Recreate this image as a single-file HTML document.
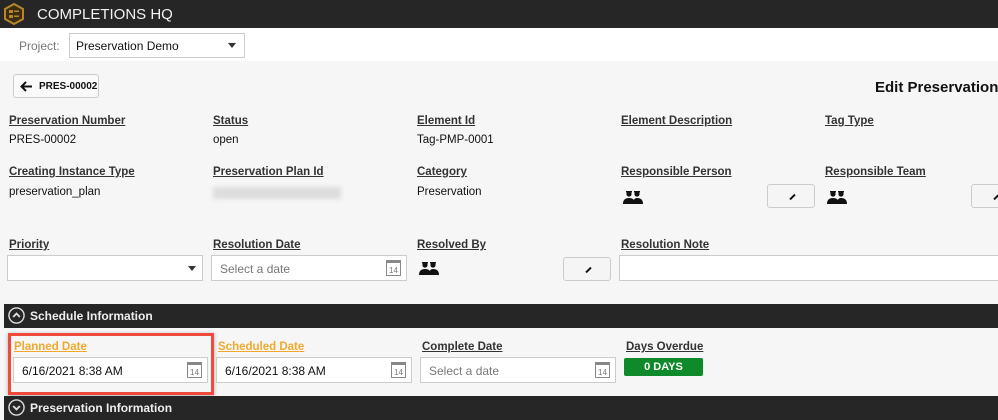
<!DOCTYPE html>
<html><head><style>
*{box-sizing:border-box;margin:0;padding:0}
body{width:998px;height:414px;overflow:hidden;background:#f6f6f6;font-family:"Liberation Sans",sans-serif;font-size:12px;color:#111;position:relative}
.a{position:absolute;white-space:nowrap}
.lbl{position:absolute;font-weight:bold;text-decoration:underline;color:#333;font-size:11.5px;white-space:nowrap}
.val{position:absolute;font-size:11.5px;color:#111;white-space:nowrap}
.inp{position:absolute;background:#fff;border:1px solid #ccc;height:26px;font-size:12px;padding:6px 8px;color:#111}
.ph{color:#777}
.cal{position:absolute;right:5px;top:4px;width:15px;height:16px;border:1.5px solid #888;font-size:8px;color:#777;text-align:center;line-height:11px;padding-top:2px;border-top-width:3px}
.btn{position:absolute;background:#f5f5f5;border:1px solid #ccc;border-radius:3px;width:48px;height:24px}
.btn:after{content:"";position:absolute;left:21px;top:11px;width:7px;height:2px;background:#111;transform:rotate(-45deg)}
.bar{position:absolute;left:4px;right:0;height:24px;background:#262626;color:#eee;font-weight:bold;font-size:12px;padding:5px 0 0 26px}
.circ{position:absolute;left:4px;top:3px;width:17px;height:17px}
.ppl{position:absolute;width:20px;height:14px}
</style></head><body>
<svg width="0" height="0" style="position:absolute"><defs>
<symbol id="pp" viewBox="0 0 20 14"><circle cx="6" cy="4" r="2.6" fill="#111"/><rect x="3" y="1" width="6" height="1.5" fill="#111"/><path d="M0 14 Q0 8 6 8 Q12 8 12 14Z" fill="#111"/><circle cx="14" cy="4" r="2.6" fill="#111"/><rect x="11" y="1" width="6" height="1.5" fill="#111"/><path d="M10 14 Q10 8 14 8 Q20 8 20 14Z" fill="#111"/></symbol>
<symbol id="up" viewBox="0 0 18 18"><circle cx="9" cy="9" r="8" fill="none" stroke="#ddd" stroke-width="1.5"/><path d="M5.5 10.5 L9 7 L12.5 10.5" fill="none" stroke="#ddd" stroke-width="2"/></symbol>
<symbol id="dn" viewBox="0 0 18 18"><circle cx="9" cy="9" r="8" fill="none" stroke="#ddd" stroke-width="1.5"/><path d="M5.5 7.5 L9 11 L12.5 7.5" fill="none" stroke="#ddd" stroke-width="2"/></symbol>
</defs></svg>
<div class="a" style="left:0;top:0;width:998px;height:28px;background:#262626"></div>
<svg class="a" style="left:3px;top:3px" width="22" height="22" viewBox="0 0 22 22"><path d="M11 1 L20 6 L20 16 L11 21 L2 16 L2 6Z" fill="#3a2d10" stroke="#b8862a" stroke-width="2"/><rect x="6" y="7" width="4" height="3" fill="#b8862a"/><rect x="6" y="12" width="4" height="3" fill="#b8862a"/><rect x="11" y="7.5" width="5" height="1.5" fill="#b8862a"/><rect x="11" y="12.5" width="5" height="1.5" fill="#b8862a"/></svg>
<div class="a" style="left:37px;top:6px;color:#f2f2f2;font-size:15px">COMPLETIONS HQ</div>
<div class="a" style="left:0;top:28px;width:998px;height:33px;background:#fff"></div>
<div class="a" style="left:19px;top:39px;color:#777;font-size:12px">Project:</div>
<div class="a" style="left:69px;top:33px;width:176px;height:25px;border:1px solid #ccc;background:#fff;padding:5px 6px;font-size:12px">Preservation Demo<span style="position:absolute;right:8px;top:9px;border:4px solid transparent;border-top:5px solid #333"></span></div>
<div class="a" style="left:13px;top:74px;width:86px;height:24px;border:1px solid #ccc;border-radius:3px;background:#fafafa;font-size:10px;font-weight:bold;padding:6px 0 0 25px">PRES-00002<svg style="position:absolute;left:6px;top:6px" width="13" height="11" viewBox="0 0 13 11"><path d="M12 5.5 H2 M6 1 L1.5 5.5 L6 10" fill="none" stroke="#111" stroke-width="2"/></svg></div>
<div class="a" style="left:875px;top:79px;font-weight:bold;font-size:15px">Edit Preservation</div>

<div class="lbl" style="left:9px;top:115px">Preservation Number</div><div class="val" style="left:9px;top:134px">PRES-00002</div>
<div class="lbl" style="left:213px;top:115px">Status</div><div class="val" style="left:213px;top:134px">open</div>
<div class="lbl" style="left:417px;top:115px">Element Id</div><div class="val" style="left:417px;top:134px">Tag-PMP-0001</div>
<div class="lbl" style="left:621px;top:115px">Element Description</div>
<div class="lbl" style="left:825px;top:115px">Tag Type</div>

<div class="lbl" style="left:9px;top:166px">Creating Instance Type</div><div class="val" style="left:9px;top:186px">preservation_plan</div>
<div class="lbl" style="left:213px;top:166px">Preservation Plan Id</div><div class="a" style="left:213px;top:187px;width:128px;height:12px;background:#ddd;filter:blur(2px)"></div>
<div class="lbl" style="left:417px;top:166px">Category</div><div class="val" style="left:417px;top:186px">Preservation</div>
<div class="lbl" style="left:621px;top:166px">Responsible Person</div><svg class="ppl" style="left:623px;top:190px"><use href="#pp"/></svg>
<div class="btn" style="left:767px;top:184px"></div>
<div class="lbl" style="left:825px;top:166px">Responsible Team</div><svg class="ppl" style="left:827px;top:190px"><use href="#pp"/></svg>
<div class="btn" style="left:971px;top:184px"></div>

<div class="lbl" style="left:9px;top:239px">Priority</div>
<div class="inp" style="left:7px;top:255px;width:196px"><span style="position:absolute;right:6px;top:10px;border:4px solid transparent;border-top:5px solid #333"></span></div>
<div class="lbl" style="left:213px;top:239px">Resolution Date</div>
<div class="inp" style="left:211px;top:255px;width:196px"><span class="ph">Select a date</span><div class="cal">14</div></div>
<div class="lbl" style="left:417px;top:239px">Resolved By</div><svg class="ppl" style="left:419px;top:261px"><use href="#pp"/></svg>
<div class="btn" style="left:563px;top:257px"></div>
<div class="lbl" style="left:621px;top:239px">Resolution Note</div>
<div class="inp" style="left:619px;top:255px;width:390px"></div>

<div class="bar" style="top:304px"><svg class="circ"><use href="#up"/></svg>Schedule Information</div>
<div class="a" style="left:8px;top:333px;width:206px;height:62px;border:3px solid #f04a3c;box-shadow:0 1px 4px rgba(0,0,0,.3)"></div>
<div class="lbl" style="left:14px;top:341px;color:#f0a92e">Planned Date</div>
<div class="inp" style="left:13px;top:357px;width:195px">6/16/2021 8:38 AM<div class="cal">14</div></div>
<div class="lbl" style="left:218px;top:341px;color:#f0a92e">Scheduled Date</div>
<div class="inp" style="left:216px;top:357px;width:196px">6/16/2021 8:38 AM<div class="cal">14</div></div>
<div class="lbl" style="left:422px;top:341px">Complete Date</div>
<div class="inp" style="left:420px;top:357px;width:196px"><span class="ph">Select a date</span><div class="cal">14</div></div>
<div class="lbl" style="left:626px;top:341px">Days Overdue</div>
<div class="a" style="left:624px;top:358px;width:79px;height:18px;background:#0e8a2a;color:#fff;font-weight:bold;font-size:11px;text-align:center;line-height:18px;border-radius:2px">0 DAYS</div>
<div class="bar" style="top:396px"><svg class="circ"><use href="#dn"/></svg>Preservation Information</div>
</body></html>
